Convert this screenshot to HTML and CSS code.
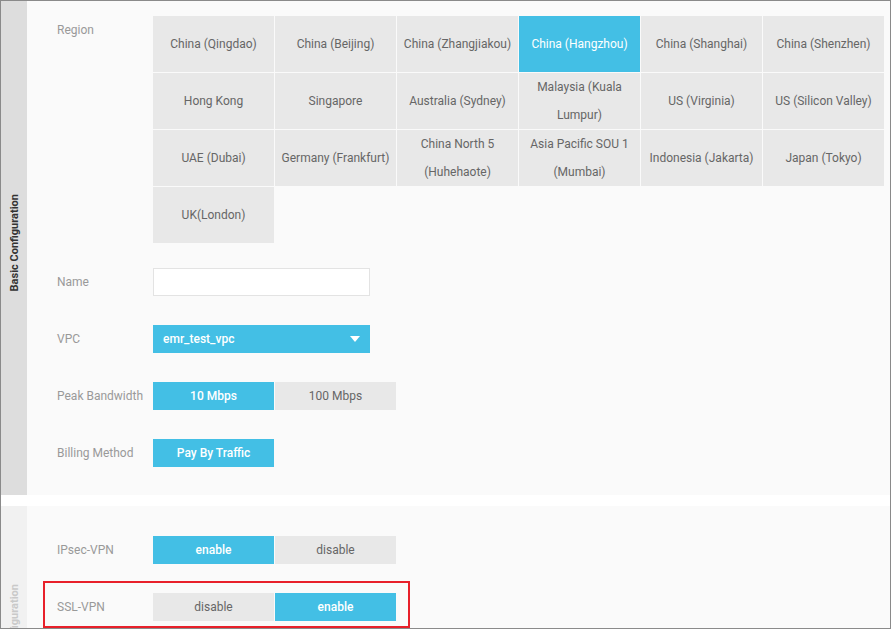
FILE: index.html
```html
<!DOCTYPE html>
<html lang="en">
<head>
    <meta charset="UTF-8">
    <meta name="viewport" content="width=device-width, initial-scale=1.0">
    <title>VPN Gateway</title>
    <link rel="stylesheet" href="styles.css">
</head>
<body>
    <div class="frame">
        <div class="section">
            <div class="section-title"><span>Basic Configuration</span></div>
            <div class="section-body">
                <div class="form-row region-row">
                    <div class="form-label">Region</div>
                    <div class="region-grid">
                        <div class="region-cell">China (Qingdao)</div>
                        <div class="region-cell">China (Beijing)</div>
                        <div class="region-cell">China (Zhangjiakou)</div>
                        <div class="region-cell active">China (Hangzhou)</div>
                        <div class="region-cell">China (Shanghai)</div>
                        <div class="region-cell">China (Shenzhen)</div>
                        <div class="region-cell">Hong Kong</div>
                        <div class="region-cell">Singapore</div>
                        <div class="region-cell">Australia (Sydney)</div>
                        <div class="region-cell">Malaysia (Kuala Lumpur)</div>
                        <div class="region-cell">US (Virginia)</div>
                        <div class="region-cell">US (Silicon Valley)</div>
                        <div class="region-cell">UAE (Dubai)</div>
                        <div class="region-cell">Germany (Frankfurt)</div>
                        <div class="region-cell">China North 5 (Huhehaote)</div>
                        <div class="region-cell">Asia Pacific SOU 1 (Mumbai)</div>
                        <div class="region-cell">Indonesia (Jakarta)</div>
                        <div class="region-cell">Japan (Tokyo)</div>
                        <div class="region-cell">UK(London)</div>
                    </div>
                </div>

                <div class="form-row">
                    <div class="form-label">Name</div>
                    <input type="text" class="text-input">
                </div>

                <div class="form-row">
                    <div class="form-label">VPC</div>
                    <div class="select-box">
                        <span>emr_test_vpc</span>
                        <span class="caret"></span>
                    </div>
                </div>

                <div class="form-row">
                    <div class="form-label">Peak Bandwidth</div>
                    <div class="btn-group">
                        <button class="opt-btn active">10 Mbps</button>
                        <button class="opt-btn">100 Mbps</button>
                    </div>
                </div>

                <div class="form-row last">
                    <div class="form-label">Billing Method</div>
                    <div class="btn-group">
                        <button class="opt-btn active">Pay By Traffic</button>
                    </div>
                </div>
            </div>
        </div>

        <div class="section muted">
            <div class="section-title"><span>Advanced Configuration</span></div>
            <div class="section-body">
                <div class="form-row ipsec-row">
                    <div class="form-label">IPsec-VPN</div>
                    <div class="btn-group">
                        <button class="opt-btn active">enable</button>
                        <button class="opt-btn">disable</button>
                    </div>
                </div>

                <div class="highlight">
                    <div class="form-row last">
                        <div class="form-label">SSL-VPN</div>
                        <div class="btn-group">
                            <button class="opt-btn">disable</button>
                            <button class="opt-btn active">enable</button>
                        </div>
                    </div>
                </div>
            </div>
        </div>
    </div>
</body>
</html>
```

FILE: styles.css
```css
:root {
    --blue: #43bfe5;
    --cell-gray: #e8e8e8;
    --label: #999;
    --text: #666;
}

* {
    margin: 0;
    padding: 0;
    box-sizing: border-box;
    font-family: Roboto, "Liberation Sans", sans-serif;
}

body {
    background: #fff;
}

.frame {
    width: 891px;
    height: 629px;
    border: 1px solid #8a8a8a;
    overflow: hidden;
    background: #fff;
}

.section {
    display: flex;
    background: #fafafa;
    min-height: 494px;
}

.section.muted {
    margin-top: 11px;
    min-height: 276px;
}

.section-title {
    width: 26px;
    flex-shrink: 0;
    background: #ddd;
    display: flex;
    align-items: center;
    justify-content: center;
}

.section-title span {
    writing-mode: vertical-rl;
    transform: rotate(180deg);
    font-size: 11px;
    font-weight: 700;
    color: #333;
    white-space: nowrap;
    margin-top: -10px;
}

.muted .section-title {
    background: #f1f1f1;
}

.muted .section-title span {
    color: #c9c9c9;
    margin-top: 0;
}

.section-body {
    flex: 1;
    padding: 15px 0 0 30px;
}

.muted .section-body {
    padding-top: 30px;
}

.form-row {
    display: flex;
    align-items: flex-start;
    padding-bottom: 29px;
}

.form-row.region-row {
    padding-bottom: 25px;
}

.form-row.last {
    padding-bottom: 0;
}

.form-row.ipsec-row {
    padding-bottom: 17px;
}

.form-label {
    width: 96px;
    flex-shrink: 0;
    font-size: 12px;
    line-height: 28px;
    color: var(--label);
}

.region-grid {
    display: grid;
    grid-template-columns: repeat(6, 121px);
    grid-auto-rows: 56px;
    gap: 1px;
}

.region-cell {
    background: var(--cell-gray);
    color: var(--text);
    font-size: 12px;
    line-height: 28px;
    text-align: center;
    display: flex;
    align-items: center;
    justify-content: center;
    padding: 0 2px;
}

.region-cell.active {
    background: var(--blue);
    color: #fff;
}

.text-input {
    width: 217px;
    height: 28px;
    border: 1px solid #e3e3e3;
    background: #fff;
    outline: none;
}

.select-box {
    width: 217px;
    height: 28px;
    background: var(--blue);
    color: #fff;
    font-size: 12px;
    font-weight: 500;
    display: flex;
    align-items: center;
    justify-content: space-between;
    padding: 0 10px;
}

.caret {
    width: 0;
    height: 0;
    border-left: 5px solid transparent;
    border-right: 5px solid transparent;
    border-top: 6px solid #fff;
}

.btn-group {
    display: flex;
    gap: 1px;
}

.opt-btn {
    width: 121px;
    height: 28px;
    border: none;
    background: var(--cell-gray);
    color: var(--text);
    font-size: 12px;
}

.opt-btn.active {
    background: var(--blue);
    color: #fff;
    font-weight: 500;
}

.highlight {
    width: 367px;
    margin-left: -14px;
    border: 2px solid #e8202a;
    padding: 10px 12px 5px 12px;
}
```
